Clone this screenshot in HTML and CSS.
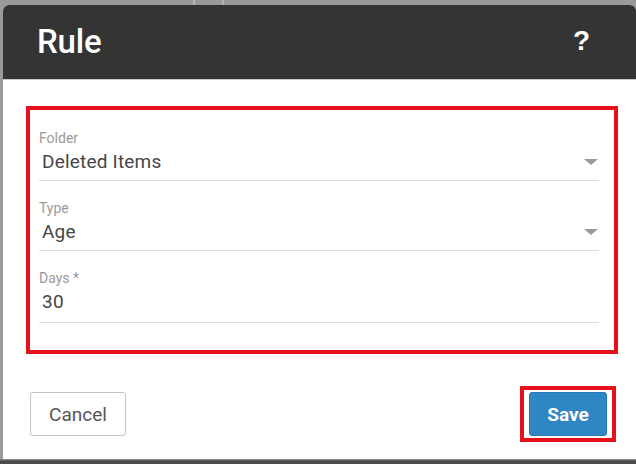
FILE: index.html
```html
<!DOCTYPE html>
<html>
<head>
<meta charset="utf-8">
<link rel="stylesheet" href="styles.css">
</head>
<body>
<div class="dialog">
  <div class="header">
    <span class="title">Rule</span>
    <span class="help">?</span>
  </div>
  <div class="content">
    <div class="form">
      <div class="field">
        <div class="label">Folder</div>
        <div class="control">
          <span class="value">Deleted Items</span>
          <span class="caret"></span>
        </div>
      </div>
      <div class="field">
        <div class="label">Type</div>
        <div class="control">
          <span class="value">Age</span>
          <span class="caret"></span>
        </div>
      </div>
      <div class="field field-input">
        <div class="label">Days *</div>
        <div class="control">
          <span class="value">30</span>
        </div>
      </div>
    </div>
    <div class="footer">
      <button class="btn btn-cancel">Cancel</button>
      <div class="highlight">
        <button class="btn btn-save">Save</button>
      </div>
    </div>
  </div>
</div>
</body>
</html>
```
FILE: styles.css
```css
html, body {
  margin: 0;
  padding: 0;
}
body {
  width: 636px;
  height: 464px;
  overflow: hidden;
  background-color: #5a5a5a;
  background-image:
    linear-gradient(to right, transparent 193px, #b4b4b4 193px, #b4b4b4 195px, transparent 195px, transparent 222px, #b4b4b4 222px, #b4b4b4 224px, transparent 224px),
    linear-gradient(to bottom, #9a9a9a 0, #9a9a9a 459px, #4a4a4a 461px);
  background-size: 100% 5px, 100% 100%;
  background-repeat: no-repeat;
  font-family: Roboto, "Liberation Sans", sans-serif;
}
.dialog {
  margin: 5px 0 0 3px;
  width: 633px;
  height: 454px;
  background: #fff;
  border-radius: 6px 6px 0 0;
  display: flex;
  flex-direction: column;
  overflow: hidden;
}
.header {
  height: 75px;
  flex: none;
  background: #343434;
  border-bottom: 1px solid #c8c8c8;
  display: flex;
  align-items: center;
  justify-content: space-between;
  padding: 0 46px 0 34px;
  box-sizing: border-box;
  color: #fff;
}
.title {
  font-size: 33px;
  font-weight: 500;
  letter-spacing: -0.2px;
  margin-top: -2px;
}
.help {
  font-family: "Liberation Sans", Arial, sans-serif;
  font-size: 28px;
  font-weight: 700;
  margin-top: -2px;
}
.content {
  padding: 26px 18px 0 23px;
}
.form {
  border: 4px solid #e5101c;
  padding: 20px 15px 27px 9px;
}
.field {
  border-bottom: 1px solid #dcdcdc;
  padding-bottom: 7px;
}
.field + .field {
  margin-top: 19px;
}
.field-input {
  margin-top: 19px;
  padding-bottom: 9px;
}
.label {
  font-size: 14px;
  line-height: 16px;
  color: #9a9a9a;
}
.control {
  display: flex;
  align-items: center;
  justify-content: space-between;
  margin-top: 5px;
  height: 22px;
}
.value {
  font-size: 19px;
  line-height: 22px;
  letter-spacing: 0.2px;
  color: #454545;
  padding-left: 3px;
}
.caret {
  width: 0;
  height: 0;
  border-left: 7px solid transparent;
  border-right: 7px solid transparent;
  border-top: 6px solid #9a9a9a;
  margin-right: 1px;
}
.footer {
  display: flex;
  align-items: center;
  justify-content: space-between;
  margin-top: 32px;
  padding: 0 2px 0 4px;
}
.btn {
  font-family: Roboto, "Liberation Sans", sans-serif;
  font-size: 19px;
  height: 44px;
  border-radius: 3px;
  box-sizing: border-box;
  margin: 0;
  padding: 0;
}
.btn-cancel {
  width: 96px;
  background: #fff;
  color: #555;
  border: 1px solid #c4c4c4;
}
.highlight {
  border: 4px solid #e5101c;
  padding: 2px 5px;
  display: flex;
}
.btn-save {
  width: 78px;
  background: #2f86c5;
  color: #fff;
  border: 1px solid #2a7ab5;
  font-weight: 700;
}
```
